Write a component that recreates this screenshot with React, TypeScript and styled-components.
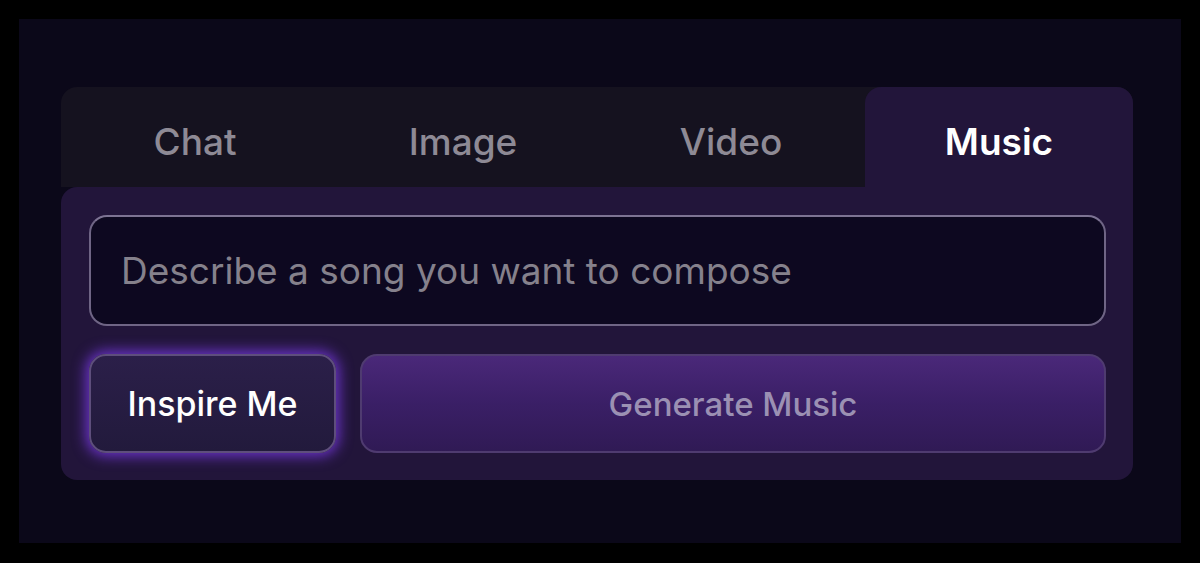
import React, { useState } from "react";
import styled, { createGlobalStyle } from "styled-components";

const GlobalStyle = createGlobalStyle`
  html, body {
    margin: 0;
    padding: 0;
    background: #000;
  }
  body {
    font-family: Inter, "Noto Sans", "Liberation Sans", sans-serif;
  }
  * {
    box-sizing: border-box;
  }
`;

const Frame = styled.div`
  width: 1200px;
  height: 563px;
  padding: 19px 19px 20px 19px;
  background: #000;
`;

const Stage = styled.div`
  width: 100%;
  height: 100%;
  background: #0b0819;
  padding: 68px 48px 0 42px;
`;

const Card = styled.div`
  width: 1072px;
  display: flex;
  flex-direction: column;
`;

const TabList = styled.div`
  display: grid;
  grid-template-columns: repeat(4, 1fr);
  height: 100px;
  background: #15121f;
  border-radius: 16px 16px 0 0;
`;

const Tab = styled.button<{ $active?: boolean }>`
  border: none;
  margin: 0;
  padding: 8px 0 0 0;
  font-family: inherit;
  font-size: 37px;
  font-weight: ${(p) => (p.$active ? 600 : 500)};
  color: ${(p) => (p.$active ? "#ffffff" : "#8e8a95")};
  background: ${(p) => (p.$active ? "#22153a" : "transparent")};
  border-radius: 16px 16px 0 0;
  cursor: pointer;
`;

const Panel = styled.div`
  background: #22153a;
  border-radius: 16px 0 16px 16px;
  padding: 28px 27px 27px 28px;
  display: flex;
  flex-direction: column;
  gap: 28px;
`;

const Input = styled.input`
  height: 111px;
  width: 100%;
  border-radius: 18px;
  border: 2px solid #6f6585;
  border-top-color: #7d7393;
  background: #0d0820;
  padding: 0 30px;
  font-family: inherit;
  font-size: 37px;
  color: #fff;
  outline: none;

  &::placeholder {
    color: #85818c;
  }
`;

const ButtonRow = styled.div`
  display: flex;
  gap: 24px;
  height: 99px;
`;

const InspireButton = styled.button`
  width: 247px;
  border-radius: 17px;
  border: 2px solid #5e4e7c;
  background: linear-gradient(180deg, #2b1f49 0%, #221a3c 100%);
  box-shadow: 0 0 14px 3px rgba(128, 60, 240, 0.8);
  color: #ffffff;
  font-family: inherit;
  font-size: 34px;
  font-weight: 500;
  padding: 0;
  cursor: pointer;
`;

const GenerateButton = styled.button`
  flex: 1;
  border-radius: 17px;
  border: 2px solid #4f3b70;
  background: linear-gradient(180deg, #4a2879 0%, #3a1f66 50%, #301a55 100%);
  color: #9b90b3;
  font-family: inherit;
  font-size: 33px;
  font-weight: 500;
  padding: 0;
  cursor: not-allowed;
`;

const tabs = ["Chat", "Image", "Video", "Music"];

export default function App() {
  const [active, setActive] = useState("Music");
  const [prompt, setPrompt] = useState("");

  return (
    <Frame>
      <GlobalStyle />
      <Stage>
        <Card>
          <TabList>
            {tabs.map((t) => (
              <Tab key={t} $active={t === active} onClick={() => setActive(t)}>
                {t}
              </Tab>
            ))}
          </TabList>
          <Panel>
            <Input
              value={prompt}
              onChange={(e) => setPrompt(e.target.value)}
              placeholder="Describe a song you want to compose"
            />
            <ButtonRow>
              <InspireButton>Inspire Me</InspireButton>
              <GenerateButton disabled={!prompt}>Generate Music</GenerateButton>
            </ButtonRow>
          </Panel>
        </Card>
      </Stage>
    </Frame>
  );
}
